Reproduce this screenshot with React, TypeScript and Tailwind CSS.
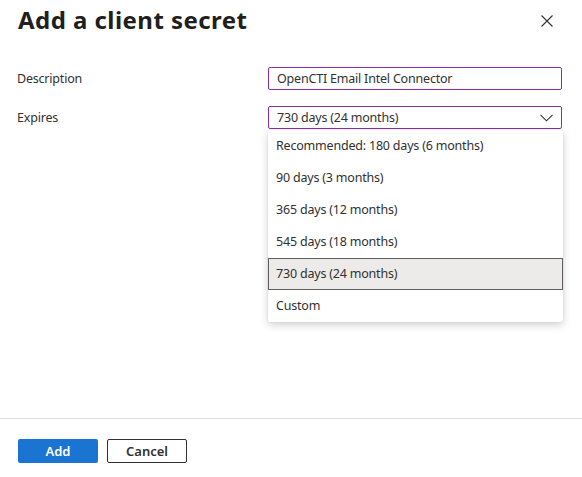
import React from "react";

const options = [
  "Recommended: 180 days (6 months)",
  "90 days (3 months)",
  "365 days (12 months)",
  "545 days (18 months)",
  "730 days (24 months)",
  "Custom",
];

export default function App() {
  return (
    <div
      className="relative flex h-[477px] w-[582px] flex-col bg-white text-[#323130]"
      style={{ fontFamily: '"Noto Sans", "Open Sans", sans-serif' }}
    >
      <div className="flex items-start justify-between pl-[18px] pr-[29px] pt-[4px]">
        <h1 className="text-[24px] font-bold leading-[32px] tracking-[0.45px] text-[#201f1e]">
          Add a client secret
        </h1>
        <svg width="12" height="12" viewBox="0 0 12 12" className="mt-[11px]">
          <path d="M0.5 0.5 L11.5 11.5 M11.5 0.5 L0.5 11.5" stroke="#323130" strokeWidth="1.1" fill="none" />
        </svg>
      </div>

      <div className="flex-1 pt-[31px] text-[12.5px] tracking-[-0.2px]">
        <div className="flex items-center pl-[17px] pr-[20px]">
          <div className="w-[251px] pt-[2px]">Description</div>
          <div className="flex h-[23px] flex-1 items-center rounded-[2px] border border-[#8b2fa8] px-[8px] pt-[1px]">
            OpenCTI Email Intel Connector
          </div>
        </div>
        <div className="mt-[16px] flex items-center pl-[17px] pr-[20px]">
          <div className="w-[251px] pt-[2px]">Expires</div>
          <div className="flex h-[23px] flex-1 items-center justify-between rounded-[2px] border border-[#8b2fa8] pl-[8px] pr-[8px] pt-[1px]">
            <span>730 days (24 months)</span>
            <svg width="13" height="8" viewBox="0 0 13 8">
              <path d="M0.5 0.8 L6.5 6.8 L12.5 0.8" stroke="#323130" strokeWidth="1.1" fill="none" />
            </svg>
          </div>
        </div>
      </div>

      <div className="h-[59px] border-t border-[#e1dfdd] pl-[18px] pt-[20px]">
        <div className="flex gap-[9px]">
          <button className="h-[24px] w-[80px] rounded-[2px] bg-[#1b74d1] pt-[1px] text-[13px] font-semibold text-white">
            Add
          </button>
          <button className="h-[24px] w-[80px] rounded-[2px] border border-[#323130] bg-white pt-[1px] text-[13px] font-semibold text-[#323130]">
            Cancel
          </button>
        </div>
      </div>

      <div className="absolute left-[268px] top-[130px] w-[295px] rounded-[2px] bg-white text-[12.5px] tracking-[-0.2px] shadow-[0_3px_8px_rgba(0,0,0,0.18),0_0_2px_rgba(0,0,0,0.12)]">
        {options.map((o) => (
          <div
            key={o}
            className={
              o.startsWith("730")
                ? "flex h-[32px] items-center border border-[#605e5c] bg-[#edebe9] pl-[7px] pt-[1px]"
                : "flex h-[32px] items-center pl-[8px] pt-[1px]"
            }
          >
            {o}
          </div>
        ))}
      </div>
    </div>
  );
}
